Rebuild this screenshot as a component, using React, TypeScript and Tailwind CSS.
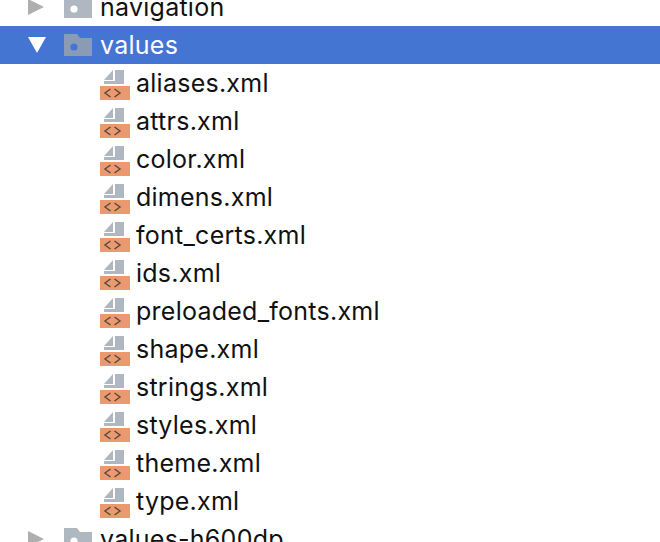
const FILES = [
  'aliases.xml',
  'attrs.xml',
  'color.xml',
  'dimens.xml',
  'font_certs.xml',
  'ids.xml',
  'preloaded_fonts.xml',
  'shape.xml',
  'strings.xml',
  'styles.xml',
  'theme.xml',
  'type.xml',
];

function Arrow({ open }: { open?: boolean }) {
  return (
    <svg width="18" height="16" viewBox="0 0 18 16" className="shrink-0">
      {open ? <path d="M0 0h18L9 16z" fill="#fff" /> : <path d="M0 0l16 8-16 8z" fill="#afafaf" />}
    </svg>
  );
}

function FolderIcon({ selected }: { selected?: boolean }) {
  const body = selected ? '#8a9bb5' : '#afb8c1';
  const dot = selected ? '#4475d2' : '#fff';
  return (
    <svg width="28" height="22" viewBox="0 0 28 22" className="shrink-0">
      <path d="M0 0h13l3 4h12v18H0z" fill={body} />
      <circle cx="10" cy="13" r="3.6" fill={dot} />
    </svg>
  );
}

function XmlIcon() {
  return (
    <svg width="30" height="30" viewBox="0 0 30 30" className="mt-[4px] shrink-0">
      <path d="M4 10l9-10v10zM15 0h9v14H4v-3h11z" fill="#afb8c1" />
      <path d="M0 16h30v14H0z" fill="#ea9a6e" />
      <path d="M10.500 19l-5.500 4 5.500 4M14.500 19l5.500 4-5.500 4" fill="none" stroke="#5a4a42" strokeWidth="1.500" />
    </svg>
  );
}

function FolderRow({ name, open, selected }: { name: string; open?: boolean; selected?: boolean }) {
  return (
    <div className={`flex h-[38px] items-center pl-[28px] ${selected ? 'bg-[#4475d2] text-white' : 'text-[#111]'}`}>
      <Arrow open={open} />
      <div className="ml-[18px] flex">
        <FolderIcon selected={selected} />
      </div>
      <span className="ml-[8px]">{name}</span>
    </div>
  );
}

export default function App() {
  return (
    <div className="h-[542px] w-[660px] overflow-hidden bg-white font-['Inter',sans-serif] text-[25px] leading-[38px] tracking-[0.25px]">
      <div className="-mt-[12px]">
        <FolderRow name="navigation" />
        <FolderRow name="values" open selected />
        {FILES.map((f) => (
          <div key={f} className="flex h-[38px] items-center pl-[100px] text-[#111]">
            <XmlIcon />
            <span className="ml-[6px]">{f}</span>
          </div>
        ))}
        <FolderRow name="values-h600dp" />
      </div>
    </div>
  );
}
